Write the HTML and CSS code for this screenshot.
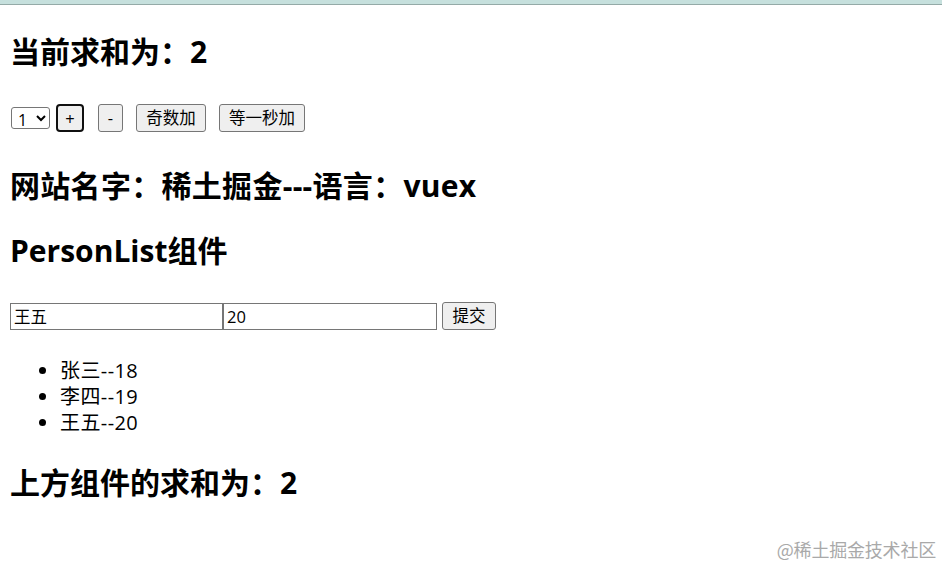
FILE: index.html
```html
<!DOCTYPE html>
<html lang="zh">
<head>
<meta charset="utf-8">
<link rel="stylesheet" href="styles.css">
</head>
<body>
<div class="topbar"></div>
<main class="page">
  <h2 class="title t1">当前求和为：2</h2>
  <div class="controls">
    <select class="sel"><option>1</option><option>2</option><option>3</option></select>
    <button class="btn focused">+</button>
    <button class="btn">-</button>
    <button class="btn">奇数加</button>
    <button class="btn">等一秒加</button>
  </div>
  <h2 class="title t2">网站名字：稀土掘金---语言：vuex</h2>
  <h2 class="title t3">PersonList组件</h2>
  <div class="form">
    <input class="field" type="text" value="王五">
    <input class="field" type="text" value="20">
    <button class="btn submit">提交</button>
  </div>
  <ul class="list">
    <li>张三--18</li>
    <li>李四--19</li>
    <li>王五--20</li>
  </ul>
  <h2 class="title t4">上方组件的求和为：2</h2>
</main>
<div class="watermark">@稀土掘金技术社区</div>
</body>
</html>
```
FILE: styles.css
```css
html, body {
  margin: 0;
  padding: 0;
  background: #ffffff;
  color: #000;
  font-family: "Open Sans", "Noto Sans CJK SC", sans-serif;
  height: 100%;
}
body { position: relative; overflow: hidden; }
.topbar {
  height: 4px;
  background: #c6e0dd;
  border-bottom: 1px solid #94aaa7;
}
.page {
  padding: 0 10px;
  display: flex;
  flex-direction: column;
  align-items: flex-start;
}
.title {
  margin: 0;
  font-size: 30px;
  line-height: 40px;
  font-weight: 700;
  font-family: "Open Sans", "Noto Sans CJK SC", sans-serif;
}
.t2 { letter-spacing: 0.3px; }
.t1 { margin-top: 27px; }
.t2 { margin-top: 34px; }
.t3 { margin-top: 25px; }
.t4 { margin-top: 27px; }
.controls {
  margin-top: 32px;
  height: 28px;
  display: flex;
  align-items: center;
}
.sel {
  width: 39px;
  height: 22px;
  margin: 0 6px 0 1px;
  font-size: 16px;
  font-family: "Open Sans", sans-serif;
  border: 1px solid #767676;
  border-radius: 3px;
  background: #fff;
  padding: 0 0 0 2px;
}
.btn {
  height: 28px;
  padding: 0 8px;
  margin-right: 13px;
  font-size: 16.5px;
  font-family: "Open Sans", "Noto Sans CJK SC", sans-serif;
  background: #efefef;
  border: 1px solid #767676;
  border-radius: 3px;
  color: #000;
  line-height: 26px;
}
.controls .btn:nth-child(2) { width: 28px; padding: 0; margin-right: 14px; }
.controls .btn:nth-child(3) { width: 25px; padding: 0; }
.controls .btn:nth-child(4) { width: 70px; padding: 0; }
.controls .btn:nth-child(5) { width: 86px; padding: 0; }
.focused {
  border: 2px solid #101010;
  border-radius: 4px;
}
.form {
  margin-top: 31px;
  display: flex;
  align-items: center;
}
.field {
  width: 213px;
  height: 27px;
  box-sizing: border-box;
  margin: 0;
  padding: 0 3px;
  font-size: 16.5px;
  font-family: "Open Sans", "Noto Sans CJK SC", sans-serif;
  border: 1px solid #767676;
  border-radius: 0;
}
.field + .field { margin-left: 0; width: 214px; }
.submit {
  margin-left: 5px;
  width: 54px;
  padding: 0;
}
.list {
  margin: 28px 0 0 0;
  padding-left: 50px;
  font-size: 20px;
  line-height: 26px;
}
.list li { letter-spacing: 0.4px; }
.watermark {
  position: absolute;
  right: 6px;
  bottom: 5px;
  font-size: 18px;
  color: #a9a9a9;
  font-family: "Noto Sans CJK SC", sans-serif;
  letter-spacing: -0.2px;
}
```
